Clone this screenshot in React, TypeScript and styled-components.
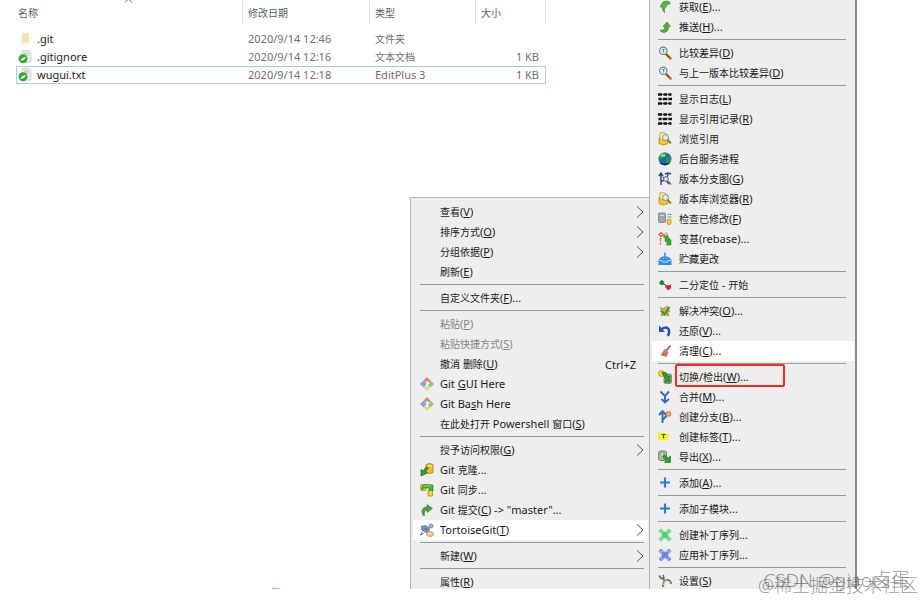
import React from "react";
import styled, { createGlobalStyle, css } from "styled-components";

const GlobalStyle = createGlobalStyle`
  * { box-sizing: border-box; }
  body {
    margin: 0;
    background: #fff;
    font-family: "Noto Sans", "Noto Sans CJK SC", sans-serif;
    font-size: 11px;
  }
`;

const Screen = styled.main`
  position: relative;
  height: calc(100vh - 11px);
  overflow: hidden;
`;

/* ---------- file list ---------- */

const FileTable = styled.table`
  width: 530px;
  margin-left: 16px;
  table-layout: fixed;
  border-collapse: separate;
  border-spacing: 0;
  color: #6f6f6f;
`;

const HeadCell = styled.th<{ $width: number; $first?: boolean }>`
  position: relative;
  width: ${(p) => p.$width}px;
  height: 24px;
  padding: 0 0 0 ${(p) => (p.$first ? 2 : 5)}px;
  border-right: 1px solid #e2e2e2;
  color: #53616f;
  font-weight: 400;
  text-align: left;
`;

const SortArrow = styled.svg`
  position: absolute;
  left: 108px;
  top: -3px;
`;

const SpacerCell = styled.td`
  height: 6px;
  padding: 0;
`;

const FileRow = styled.tr<{ $selected?: boolean }>`
  ${(p) =>
    p.$selected &&
    css`
      outline: 1px solid #a5cfee;
      outline-offset: -1px;
    `}
`;

const Cell = styled.td<{ $right?: boolean }>`
  height: 18px;
  padding: 0 7px 0 5px;
  line-height: 18px;
  white-space: nowrap;
  text-align: ${(p) => (p.$right ? "right" : "left")};
`;

const NameCell = styled(Cell)`
  padding-left: 2px;
  color: #1c1c1c;
`;

const FileName = styled.span`
  display: flex;
  align-items: center;
  gap: 5px;
`;

const Han = styled.span`
  font-size: 10px;
`;

/* ---------- menus ---------- */

const Menu = styled.div`
  position: absolute;
  left: 410px;
  top: 197px;
  width: 240px;
  padding: 4px 1px 4px 2px;
  border: 1px solid #b4b4b4;
  background: #eee;
  color: #1a1a1a;
`;

const SubMenu = styled(Menu)`
  left: 649px;
  top: -3px;
  width: 208px;
  padding: 0 1px 4px 2px;
  border-width: 0 2px 0 1px;
  border-right-color: #8b8b8b;
`;

const Item = styled.button<{ $hot?: boolean; $sub?: boolean }>`
  position: relative;
  display: flex;
  align-items: center;
  gap: ${(p) => (p.$sub ? 7 : 6)}px;
  width: 100%;
  height: 20px;
  padding: 0 4px 0 ${(p) => (p.$sub ? 6 : 7)}px;
  border: 0;
  background: ${(p) => (p.$hot ? "#fff" : "transparent")};
  color: inherit;
  font: inherit;
  text-align: left;
  white-space: nowrap;
  &:disabled {
    color: #858585;
  }
`;

const IconSlot = styled.span`
  display: flex;
  flex: none;
  width: 14px;
  height: 14px;
`;

const Label = styled.span`
  flex: 1;
  line-height: 20px;
`;

const Shortcut = styled.span`
  padding-right: 8px;
`;

const Separator = styled.hr<{ $sub?: boolean }>`
  height: 1px;
  margin: ${(p) => (p.$sub ? "2px 8px 3px 6px" : "2px 4px 3px 7px")};
  border: 0;
  background: #989898;
`;

const Highlight = styled.span`
  position: absolute;
  left: 23px;
  top: -3px;
  width: 110px;
  height: 23px;
  border: 2px solid #ec2f25;
  border-radius: 2px;
`;

/* ---------- overlays ---------- */

const Mark = styled.span`
  position: absolute;
  left: 272px;
  bottom: 0;
  width: 7px;
  height: 1px;
  background: #e9a070;
`;

const Watermark = styled.div<{ $low?: boolean }>`
  position: absolute;
  right: ${(p) => (p.$low ? 6 : 14)}px;
  bottom: ${(p) => (p.$low ? 4 : 9)}px;
  font-size: ${(p) => (p.$low ? 18 : 19)}px;
  line-height: 22px;
  font-weight: 300;
  color: rgba(80, 80, 80, 0.6);
  white-space: nowrap;
`;

/* ---------- icons ---------- */

function Patch({ light, dark }: { light: string; dark: string }) {
  return (
    <>
      <path d="M3.5.5L7 3.8 10.500.5l3 3L10.200 7l3.300 3.500-3 3L7 10.200 3.500 13.500l-3-3L3.800 7 .5 3.500z" fill={light} />
      <path d="M4 4h6v6H4z" fill={dark} opacity=".55" />
      <path d="M2 2l10 10M12 2L2 12" stroke={dark} strokeWidth="1.2" strokeDasharray="1.2 1.4" />
      <path d="M3.5 1L1 3.500M10.500 1L13 3.500M3.500 13L1 10.500M10.500 13l2.500-2.500" stroke={dark} strokeWidth=".8" />
    </>
  );
}

const icons: Record<string, React.ReactNode> = {
  git: (
    <>
      <path d="M7 0l3.4 3.4L7 6.8 3.6 3.4z" fill="#ee8078" />
      <path d="M3.5 3.5L7 7l-3.5 3.5L0 7z" fill="#7da7e8" />
      <path d="M10.500 3.500L14 7l-3.500 3.500L7 7z" fill="#7fc98a" />
      <path d="M7 7.200l3.400 3.400L7 14l-3.400-3.400z" fill="#f2d27a" />
      <path d="M7 4v6M7 5l2.500 2" stroke="#fff" strokeWidth="1.3" />
    </>
  ),
  clone: (
    <>
      <path d="M6 1.5q3.5-2 7 0v8q-3.5 2-7 0z" fill="#f3bd27" stroke="#a97910" strokeWidth=".8" />
      <path d="M7 2.6q2.5 1 5 0" stroke="#fff0a0" fill="none" />
      <path d="M8.500 5L5.500 8l2 2L1 13V6.500l2 1.300 3.500-4z" fill="#2fa52b" stroke="#126a12" strokeWidth=".7" />
    </>
  ),
  sync: (
    <>
      <rect x=".5" y="1.5" width="5.500" height="6" rx="1" fill="#f2c63b" stroke="#a7851c" strokeWidth=".7" />
      <path d="M8 7.5h4.500V13H8z" fill="#f4ce4c" stroke="#a7851c" strokeWidth=".7" />
      <path d="M2 7V4q1-3 5-2.500l6 .5v6l-2-1.500L9 8V5H5.500L4 5z" fill="#3fb535" stroke="#1a7a1e" strokeWidth=".6" />
      <path d="M4 3.300q3-1.300 7 .2" stroke="#9be584" fill="none" />
    </>
  ),
  commit: <path d="M3 12.500Q-.5 4.500 7 4V1.500L12.500 5.500 7 9.500V7Q3.500 7.200 4.600 12.500z" fill="#4b9d48" stroke="#2c7a30" strokeWidth=".5" />,
  tortoise: (
    <>
      <ellipse cx="5.500" cy="6" rx="4" ry="3" transform="rotate(25 5.500 6)" fill="#8ba0cf" stroke="#53658f" strokeWidth=".8" />
      <circle cx="11" cy="3" r="1.9" fill="#a3b3d9" stroke="#4d5e88" strokeWidth=".7" />
      <path d="M1 3l2 1M2 9l-1.500 3 3-1.500M3.500 6h5M5 4l2 4" stroke="#52658f" fill="none" />
      <ellipse cx="10" cy="11" rx="3.6" ry="2.4" fill="#f0d68a" stroke="#9b8651" strokeWidth=".7" />
    </>
  ),
  pull: <path d="M6.500 12.500Q4 10.500 4.500 7H2L5 2q4-2 6.500 0l.5 2Q8.500 3.500 8.200 7H7q-.8 2.500-.5 5.500z" fill="#54b63c" stroke="#32852a" strokeWidth=".6" />,
  push: <path d="M2 10q4.500 1 5-3.500H5L9 2l3.500 4.500h-2Q10.500 12 6 12.500 3 12.600 2 10z" fill="#54a944" stroke="#2f7a32" strokeWidth=".6" />,
  diff: (
    <>
      <path d="M8.500 8.500l4 4" stroke="#c07a28" strokeWidth="2.6" strokeLinecap="round" />
      <path d="M8 8l3.500 3.500" stroke="#44362a" strokeWidth="1" />
      <circle cx="5.300" cy="4.800" r="3.700" fill="#d8ecf4" stroke="#757b82" strokeWidth="1.1" />
      <path d="M4 3.600h3M5.500 3.600v3" stroke="#5c95aa" />
    </>
  ),
  log: (
    <>
      <path d="M1 2.500h12M1 7h12M1 11.500h12" stroke="#555" strokeWidth="1" />
      <path d="M0 2.500h4M5.500 2.500h3.500M10.500 2.500H13.500M.5 7h3M5 7h4M10.500 7h3.500M0 11.500h4M5.500 11.500h3.500M10.500 11.500h3" stroke="#111" strokeWidth="2.600" />
    </>
  ),
  browse: (
    <>
      <path d="M1 5.500q4.500-2 9 0v6q-4.500 3-9 0z" fill="#f4cd25" stroke="#ae8717" strokeWidth=".8" />
      <path d="M2 .8h5l2 2v5H2z" fill="#fff4a8" stroke="#a78c43" strokeWidth=".7" />
      <circle cx="7.500" cy="5.500" r="3" fill="#dfeced" stroke="#878787" />
      <path d="M9.700 7.800l3.200 3.600" stroke="#916b39" strokeWidth="1.8" />
    </>
  ),
  globe: (
    <>
      <circle cx="7" cy="7" r="6.500" fill="#1767b5" />
      <path d="M2 3Q5-.5 9 1L8 4 5 5 4 8 1 7zM8 6l4-2 1 4-2 4-3-1z" fill="#2c9b35" />
      <ellipse cx="5" cy="3.400" rx="2.600" ry="1.600" fill="#a5e6bc" opacity=".75" />
      <path d="M2 11q5 3 9 0" stroke="#0c2e71" strokeWidth="1.4" fill="none" />
    </>
  ),
  graph: (
    <>
      <path d="M3 13V2M1 4l2-3 2 3M3 9Q9 9 10 2M7 2l3-1 3 1M5 5l6 7" stroke="#27427f" strokeWidth="1.4" fill="none" />
      <circle cx="8" cy="7" r="2.4" fill="#d7e3f1" stroke="#606b85" />
      <path d="M10 9l3 3.500" stroke="#916a51" strokeWidth="1.7" />
    </>
  ),
  check: (
    <>
      <rect x=".5" y="1" width="7" height="9.500" rx="1" fill="#a0a7a8" stroke="#747d80" strokeWidth=".8" />
      <path d="M2 3.500h4" stroke="#d7dddd" />
      <path d="M9.500 2.500h4M9.500 5h4" stroke="#4fa3a6" />
      <path d="M9 7.500q2-1.200 4 0v4.500q-2 1.200-4 0z" fill="#f5c72e" stroke="#b18a1d" strokeWidth=".6" />
    </>
  ),
  rebase: (
    <>
      <path d="M1 2.500L3 .7l2.300 1.800L3 4.500zM2.500 6v3.500M2.500 10.700v1.700" stroke="#e9642c" strokeWidth="1.4" fill="none" />
      <path d="M5 4l5-1v2l3 3v5H8l1.500-1.800L7 9V6z" fill="#37ac2b" stroke="#20791d" strokeWidth=".5" />
      <circle cx="8" cy="2.500" r="1.500" stroke="#e9803c" />
    </>
  ),
  stash: (
    <>
      <path d="M3 5L.5 8v5h13V8L11 5H9v2H5V5z" fill="#348be6" />
      <path d="M1.500 8.500H4L5 10h4l1-1.500h2.500" stroke="#cfe6ff" fill="none" />
      <path d="M7 .5v6M4.800 4.600L7 7l2.200-2.400" stroke="#348be6" strokeWidth="1.5" fill="none" />
    </>
  ),
  bisect: (
    <>
      <path d="M1 4.500l3-3 2.500 3L5.500 7h-3z" fill="#26862b" />
      <path d="M7 9l1.500-2L11 7.500 13 6v4.500L10 12.500z" fill="#d42b32" />
      <path d="M6 6l2.500 2" stroke="#333" />
    </>
  ),
  resolve: (
    <>
      <path d="M2 3.500l3 1L10 2l-.5 3 2.500 2-2 1.500 1 3.500-4-1.500-4 1.500 1-3.500-2-1.500 1.500-1z" fill="#e1a24c" stroke="#8a853a" strokeWidth=".6" />
      <path d="M3.500 7l3 3.500L11.500 3" stroke="#3a9c2a" strokeWidth="2.2" fill="none" />
    </>
  ),
  revert: (
    <>
      <path d="M4 5q4-3 6.500 0 1.500 2.800-.5 7" stroke="#2452b5" strokeWidth="2.4" fill="none" />
      <path d="M1 1.500v6.500h6z" fill="#2452b5" />
    </>
  ),
  clean: (
    <>
      <path d="M12.500 1.500L8.500 6.500" stroke="#6a5a94" strokeWidth="1.5" />
      <path d="M7 5l3 3-1.500 4.500L3 11z" fill="#dc9555" stroke="#9a6241" strokeWidth=".6" />
      <path d="M6.500 7L5 11.500M8.500 8L7 12" stroke="#925c58" strokeWidth=".8" />
    </>
  ),
  checkout: (
    <>
      <rect x="6" y="4" width="7.500" height="9.500" rx="1.5" fill="#a6aba6" stroke="#696f69" strokeWidth=".7" />
      <circle cx="3.500" cy="3.500" r="3" fill="#f1cf34" stroke="#93951f" strokeWidth=".7" />
      <path d="M4 2.500h4l2.500 4L12 5.500V12H6.500L8 10 6 6.500z" fill="#2f9d24" stroke="#166216" strokeWidth=".6" />
    </>
  ),
  merge: <path d="M2.500 1.500L7 6l4-4.500M7 6v6M3.500 9L7 12.500 11 9" stroke="#376fb4" strokeWidth="2" fill="none" />,
  branch: (
    <>
      <path d="M4.500 13V2M1 5l3.500-4L8 5M4.500 10L8.500 6" stroke="#3972b8" strokeWidth="2" fill="none" />
      <circle cx="10.500" cy="4" r="2" fill="#f6ceb4" stroke="#ea7a3c" strokeWidth="1.4" />
    </>
  ),
  tag: (
    <>
      <path d="M0 3h9l2 3-2 4H0z" fill="#f8f019" />
      <path d="M3.500 4.500h4M5.500 4.500v4" stroke="#555914" strokeWidth="1.2" />
    </>
  ),
  exportIcon: (
    <>
      <rect x=".6" y="1" width="8" height="9.500" rx="2" fill="#b0b6b0" stroke="#626862" strokeWidth=".8" />
      <circle cx="4" cy="4.500" r="1.8" fill="#dce2dc" stroke="#858b85" strokeWidth=".6" />
      <path d="M6 4.500l4 3.500L12.500 6v6.500H6.500L8 10.500 5 7.500z" fill="#2da52a" stroke="#146b16" strokeWidth=".6" />
    </>
  ),
  plus: <path d="M7 1.500v10M2 6.500h10" stroke="#2f79d0" strokeWidth="2.2" />,
  patchGreen: <Patch light="#93e6a2" dark="#48bd62" />,
  patchBlue: <Patch light="#9fb0ec" dark="#5972ce" />,
  settings: (
    <>
      <path d="M1 1.500l2 3 3-.5L5 1M4 4l3 3" stroke="#60636b" strokeWidth="1.5" fill="none" />
      <path d="M5 13Q5 6 9 6t4 4" stroke="#8b8067" strokeWidth="2" fill="none" />
      <path d="M5.500 11Q6 7 9 6.500" stroke="#e1d4ac" fill="none" />
    </>
  ),
  folder: <path d="M4 1h7v11l-3-1-4 1z" fill="#f8e5ac" />,
  file: (
    <>
      <path d="M4 .5h7l2 2V12H4z" fill="#ececec" stroke="#c4c4c4" strokeWidth=".7" />
      <path d="M6 3h5M6 5h5" stroke="#c5bdbb" />
      <circle cx="5" cy="8.800" r="4.500" fill="#35a735" />
      <path d="M2.600 10.800Q3.200 7.500 7.600 7 7 10.800 2.600 10.800z" fill="#fff" />
    </>
  ),
};

function Icon({ name }: { name?: string }) {
  return (
    <IconSlot>
      {name && (
        <svg width="14" height="14" viewBox="0 0 14 14" fill="none" aria-hidden="true">
          {icons[name]}
        </svg>
      )}
    </IconSlot>
  );
}

/* Chinese runs are set one size down; "_X" marks the access key. */
function Mixed({ text }: { text: string }) {
  return (
    <>
      {text.split(/([\u4e00-\u9fff]+|_[A-Za-z])/).map((run, i) => {
        if (/^[\u4e00-\u9fff]/.test(run)) return <Han key={i}>{run}</Han>;
        if (/^_[A-Za-z]$/.test(run)) return <u key={i}>{run[1]}</u>;
        return run;
      })}
    </>
  );
}

type Entry =
  | "-"
  | { text: string; icon?: string; arrow?: boolean; keys?: string; off?: boolean; hot?: boolean; boxed?: boolean };

const folderMenu: Entry[] = [
  { text: "查看(_V)", arrow: true },
  { text: "排序方式(_O)", arrow: true },
  { text: "分组依据(_P)", arrow: true },
  { text: "刷新(_E)" },
  "-",
  { text: "自定义文件夹(_F)..." },
  "-",
  { text: "粘贴(_P)", off: true },
  { text: "粘贴快捷方式(_S)", off: true },
  { text: "撤消 删除(_U)", keys: "Ctrl+Z" },
  { text: "Git _GUI Here", icon: "git" },
  { text: "Git Ba_sh Here", icon: "git" },
  { text: "在此处打开 Powershell 窗口(_S)" },
  "-",
  { text: "授予访问权限(_G)", arrow: true },
  { text: "Git 克隆...", icon: "clone" },
  { text: "Git 同步...", icon: "sync" },
  { text: 'Git 提交(_C) -> "master"...', icon: "commit" },
  { text: "TortoiseGit(_T)", icon: "tortoise", arrow: true, hot: true },
  "-",
  { text: "新建(_W)", arrow: true },
  "-",
  { text: "属性(_R)" },
];

const gitMenu: Entry[] = [
  { text: "获取(_E)...", icon: "pull" },
  { text: "推送(_H)...", icon: "push" },
  "-",
  { text: "比较差异(_D)", icon: "diff" },
  { text: "与上一版本比较差异(_D)", icon: "diff" },
  "-",
  { text: "显示日志(_L)", icon: "log" },
  { text: "显示引用记录(_R)", icon: "log" },
  { text: "浏览引用", icon: "browse" },
  { text: "后台服务进程", icon: "globe" },
  { text: "版本分支图(_G)", icon: "graph" },
  { text: "版本库浏览器(_R)", icon: "browse" },
  { text: "检查已修改(_F)", icon: "check" },
  { text: "变基(rebase)...", icon: "rebase" },
  { text: "贮藏更改", icon: "stash" },
  "-",
  { text: "二分定位 - 开始", icon: "bisect" },
  "-",
  { text: "解决冲突(_O)...", icon: "resolve" },
  { text: "还原(_V)...", icon: "revert" },
  { text: "清理(_C)...", icon: "clean", hot: true },
  "-",
  { text: "切换/检出(_W)...", icon: "checkout", boxed: true },
  { text: "合并(_M)...", icon: "merge" },
  { text: "创建分支(_B)...", icon: "branch" },
  { text: "创建标签(_T)...", icon: "tag" },
  { text: "导出(_X)...", icon: "exportIcon" },
  "-",
  { text: "添加(_A)...", icon: "plus" },
  "-",
  { text: "添加子模块...", icon: "plus" },
  "-",
  { text: "创建补丁序列...", icon: "patchGreen" },
  { text: "应用补丁序列...", icon: "patchBlue" },
  "-",
  { text: "设置(_S)", icon: "settings" },
];

function Entries({ items, sub }: { items: Entry[]; sub?: boolean }) {
  return (
    <>
      {items.map((item, i) =>
        item === "-" ? (
          <Separator key={i} $sub={sub} />
        ) : (
          <Item key={i} type="button" role="menuitem" disabled={item.off} $hot={item.hot} $sub={sub}>
            <Icon name={item.icon} />
            <Label>
              <Mixed text={item.text} />
            </Label>
            {item.keys && <Shortcut>{item.keys}</Shortcut>}
            {item.arrow && (
              <svg width="8" height="13" viewBox="0 0 8 13" fill="none" stroke="#555" aria-hidden="true">
                <path d="M1 .5l6 5.500-6 5.500" />
              </svg>
            )}
            {item.boxed && <Highlight />}
          </Item>
        )
      )}
    </>
  );
}

const files = [
  { name: ".git", date: "2020/9/14 12:46", type: "文件夹", size: "", icon: "folder" },
  { name: ".gitignore", date: "2020/9/14 12:16", type: "文本文档", size: "1 KB", icon: "file" },
  { name: "wugui.txt", date: "2020/9/14 12:18", type: "EditPlus 3", size: "1 KB", icon: "file", selected: true },
];

export default function App() {
  return (
    <>
      <GlobalStyle />
      <Screen>
        <FileTable>
          <thead>
            <tr>
              <HeadCell $width={227} $first>
                <Han>名称</Han>
                <SortArrow width="9" height="6" viewBox="0 0 9 6" fill="none" stroke="#777">
                  <path d="M1 5.500L4.500 2 8 5.500" />
                </SortArrow>
              </HeadCell>
              <HeadCell $width={127}>
                <Han>修改日期</Han>
              </HeadCell>
              <HeadCell $width={106}>
                <Han>类型</Han>
              </HeadCell>
              <HeadCell $width={70}>
                <Han>大小</Han>
              </HeadCell>
            </tr>
          </thead>
          <tbody>
            <tr>
              <SpacerCell colSpan={4} />
            </tr>
            {files.map((f) => (
              <FileRow key={f.name} $selected={f.selected}>
                <NameCell>
                  <FileName>
                    <Icon name={f.icon} />
                    {f.name}
                  </FileName>
                </NameCell>
                <Cell>{f.date}</Cell>
                <Cell>
                  <Mixed text={f.type} />
                </Cell>
                <Cell $right>{f.size}</Cell>
              </FileRow>
            ))}
          </tbody>
        </FileTable>
        <Mark />
        <Menu role="menu">
          <Entries items={folderMenu} />
        </Menu>
        <SubMenu role="menu">
          <Entries items={gitMenu} sub />
        </SubMenu>
      </Screen>
      <Watermark>CSDN @giao卤蛋</Watermark>
      <Watermark $low>@稀土掘金技术社区</Watermark>
    </>
  );
}
